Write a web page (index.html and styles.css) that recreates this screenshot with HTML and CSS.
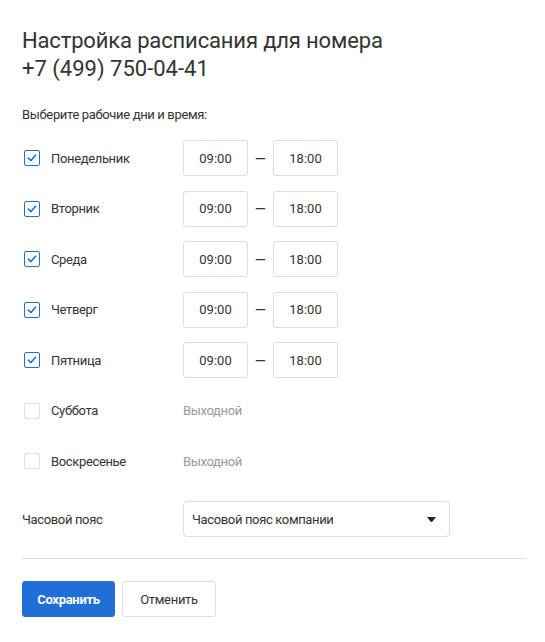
FILE: index.html
```html
<!DOCTYPE html>
<html lang="ru">
<head>
<meta charset="utf-8">
<link rel="stylesheet" href="styles.css">
</head>
<body>
<div class="page">
  <h1 class="title"><span class="title-text">Настройка расписания для номера</span><br>+7 (499) 750-04-41</h1>
  <p class="subtitle">Выберите рабочие дни и время:</p>
  <div class="days">
    <div class="row">
      <label class="day"><span class="cb checked"><svg viewBox="0 0 16 16"><path d="M4 8.2l2.7 2.8 5.3-6"/></svg></span>Понедельник</label>
      <div class="times"><span class="time">09:00</span><span class="dash">–</span><span class="time">18:00</span></div>
    </div>
    <div class="row">
      <label class="day"><span class="cb checked"><svg viewBox="0 0 16 16"><path d="M4 8.2l2.7 2.8 5.3-6"/></svg></span>Вторник</label>
      <div class="times"><span class="time">09:00</span><span class="dash">–</span><span class="time">18:00</span></div>
    </div>
    <div class="row">
      <label class="day"><span class="cb checked"><svg viewBox="0 0 16 16"><path d="M4 8.2l2.7 2.8 5.3-6"/></svg></span>Среда</label>
      <div class="times"><span class="time">09:00</span><span class="dash">–</span><span class="time">18:00</span></div>
    </div>
    <div class="row">
      <label class="day"><span class="cb checked"><svg viewBox="0 0 16 16"><path d="M4 8.2l2.7 2.8 5.3-6"/></svg></span>Четверг</label>
      <div class="times"><span class="time">09:00</span><span class="dash">–</span><span class="time">18:00</span></div>
    </div>
    <div class="row">
      <label class="day"><span class="cb checked"><svg viewBox="0 0 16 16"><path d="M4 8.2l2.7 2.8 5.3-6"/></svg></span>Пятница</label>
      <div class="times"><span class="time">09:00</span><span class="dash">–</span><span class="time">18:00</span></div>
    </div>
    <div class="row">
      <label class="day"><span class="cb"></span>Суббота</label>
      <div class="off">Выходной</div>
    </div>
    <div class="row">
      <label class="day"><span class="cb"></span>Воскресенье</label>
      <div class="off">Выходной</div>
    </div>
  </div>
  <div class="tz">
    <span class="tz-label">Часовой пояс</span>
    <div class="select"><span class="select-text">Часовой пояс компании</span><svg class="caret" viewBox="0 0 9 5"><path d="M0 0h9L5 5h-1z"/></svg></div>
  </div>
  <div class="actions">
    <button class="btn primary">Сохранить</button>
    <button class="btn secondary">Отменить</button>
  </div>
</div>
</body>
</html>
```
FILE: styles.css
```css
* { box-sizing: border-box; }
html, body { margin: 0; background: #fff; }
body { font-family: Roboto, "Noto Sans", Arial, sans-serif; color: #333; }
.page { padding: 27px 19px 0 22px; }
.title { margin: 0; font-size: 22px; line-height: 28px; font-weight: 400; color: #333; }
.title-text { letter-spacing: -0.15px; }
.subtitle { margin: 24px 0 0; font-size: 13px; line-height: 16px; color: #333; letter-spacing: -0.35px; }
.days { margin-top: 17px; display: flex; flex-direction: column; gap: 14.5px; }
.row { display: flex; align-items: center; height: 36px; }
.day { display: flex; align-items: center; width: 161px; font-size: 13px; color: #333; letter-spacing: -0.35px; }
.cb { flex: none; width: 16px; height: 16px; margin: 0 11px 0 2px; border: 1px solid #ddd; border-radius: 2px; display: inline-flex; }
.cb.checked { border-color: #1f6fd6; }
.cb svg { width: 14px; height: 14px; fill: none; stroke: #1f6fd6; stroke-width: 1.8; stroke-linecap: square; }
.times { display: flex; align-items: center; }
.time { width: 65px; height: 36px; border: 1px solid #ddd; border-radius: 3px; display: flex; align-items: center; justify-content: center; font-size: 13px; color: #333; }
.dash { width: 25px; text-align: center; font-size: 19px; line-height: 1; color: #333; }
.off { font-size: 13px; color: #999; letter-spacing: -0.35px; }
.tz { display: flex; align-items: center; margin-top: 22px; padding-bottom: 21px; border-bottom: 1px solid #ddd; }
.tz-label { width: 161px; font-size: 13px; color: #333; letter-spacing: -0.35px; }
.select { width: 267px; height: 36px; border: 1px solid #ddd; border-radius: 4px; display: flex; align-items: center; justify-content: space-between; padding: 0 13px 0 8px; font-size: 13px; color: #333; }
.select-text { letter-spacing: -0.35px; }
.caret { width: 9px; height: 5px; fill: #222; }
.actions { display: flex; gap: 7px; margin-top: 22px; }
.btn { height: 36px; width: 94px; padding: 0; border: 1px solid #ddd; border-radius: 3px; background: #fff; font-family: inherit; font-size: 13px; color: #333; letter-spacing: -0.3px; }
.btn.primary { background: #1f6fd6; border-color: #1f6fd6; color: #fff; font-weight: 700; width: 93px; }
```
